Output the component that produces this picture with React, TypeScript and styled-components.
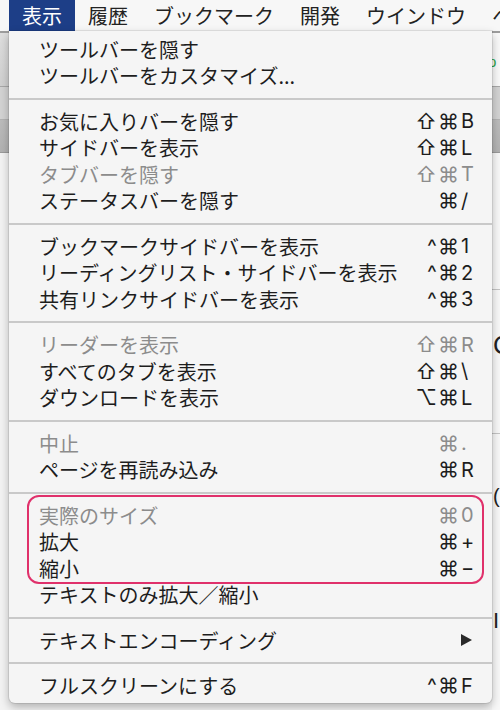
import React from "react";
import styled, { createGlobalStyle } from "styled-components";

type Item = {
  label: string;
  mods?: string;
  keyName?: string;
  disabled?: boolean;
  submenu?: boolean;
  boxed?: boolean;
};

const sections: Item[][] = [
  [{ label: "ツールバーを隠す" }, { label: "ツールバーをカスタマイズ..." }],
  [
    { label: "お気に入りバーを隠す", mods: "⇧⌘", keyName: "B" },
    { label: "サイドバーを表示", mods: "⇧⌘", keyName: "L" },
    { label: "タブバーを隠す", mods: "⇧⌘", keyName: "T", disabled: true },
    { label: "ステータスバーを隠す", mods: "⌘", keyName: "/" },
  ],
  [
    { label: "ブックマークサイドバーを表示", mods: "^⌘", keyName: "1" },
    { label: "リーディングリスト・サイドバーを表示", mods: "^⌘", keyName: "2" },
    { label: "共有リンクサイドバーを表示", mods: "^⌘", keyName: "3" },
  ],
  [
    { label: "リーダーを表示", mods: "⇧⌘", keyName: "R", disabled: true },
    { label: "すべてのタブを表示", mods: "⇧⌘", keyName: "\\" },
    { label: "ダウンロードを表示", mods: "⌥⌘", keyName: "L" },
  ],
  [
    { label: "中止", mods: "⌘", keyName: ".", disabled: true },
    { label: "ページを再読み込み", mods: "⌘", keyName: "R" },
  ],
  [
    { label: "実際のサイズ", mods: "⌘", keyName: "0", disabled: true, boxed: true },
    { label: "拡大", mods: "⌘", keyName: "+", boxed: true },
    { label: "縮小", mods: "⌘", keyName: "−", boxed: true },
    { label: "テキストのみ拡大／縮小" },
  ],
  [{ label: "テキストエンコーディング", submenu: true }],
  [{ label: "フルスクリーンにする", mods: "^⌘", keyName: "F" }],
];

const menus = ["表示", "履歴", "ブックマーク", "開発", "ウインドウ", "ヘルプ"];

const GlobalStyle = createGlobalStyle`
  body {
    margin: 0;
    background: #f3f3f3;
    overflow: hidden;
    font-family: "Noto Sans CJK JP", "Liberation Sans", sans-serif;
  }
`;

const Screen = styled.div`
  position: relative;
  width: 500px;
  height: 710px;
  overflow: hidden;
  background: #f3f3f3;
`;

const MenuBar = styled.div`
  display: flex;
  height: 31px;
  padding-left: 9px;
  background: #f7f7f7;
  border-bottom: 2px solid #9d9d9d;
  white-space: nowrap;
  overflow: hidden;
`;

const MenuTitle = styled.div<{ $active?: boolean }>`
  display: flex;
  align-items: center;
  padding: 0 13px;
  font-size: 20px;
  color: ${(p) => (p.$active ? "#fff" : "#222")};
  background: ${(p) => (p.$active ? "#1d3e87" : "transparent")};
`;

const Toolbar = styled.div`
  display: flex;
  justify-content: flex-end;
  height: 53px;
  background: linear-gradient(#dedede, #d0d0d0);
  border-bottom: 1px solid #a8a8a8;
`;

const AddressTail = styled.div`
  width: 12px;
  padding-top: 20px;
  background: #f9f9f9;
  color: #2fa44a;
  font-family: "Liberation Sans", sans-serif;
  font-size: 15px;
  overflow: hidden;
`;

const FavBar = styled.div`
  height: 32px;
  background: #d3d3d3;
  border-bottom: 1px solid #b3b3b3;
`;

const TabBar = styled.div`
  height: 32px;
  background: linear-gradient(#bcbcbc, #b2b2b2);
  border-bottom: 1px solid #9a9a9a;
`;

const Content = styled.div`
  display: flex;
  justify-content: flex-end;
  height: 600px;
`;

const PageEdge = styled.div`
  width: 8px;
  background: #f8f8f8;
  color: #222;
  font-family: "Liberation Sans", sans-serif;
  overflow: hidden;
`;

const EdgeGlyph = styled.div<{ $top: number; $size: number }>`
  margin-top: ${(p) => p.$top}px;
  font-size: ${(p) => p.$size}px;
  line-height: 1;
  padding-left: 1px;
`;

const EdgeRule = styled.div<{ $top: number }>`
  margin-top: ${(p) => p.$top}px;
  height: 1px;
  background: #c4c4c4;
`;

const Dropdown = styled.div`
  position: absolute;
  top: 31px;
  left: 9px;
  width: 483px;
  padding: 5px 0 4px;
  background: #f5f5f5;
  border-radius: 0 0 6px 6px;
  box-shadow: 0 0 0 1px rgba(0, 0, 0, 0.08), 0 4px 10px rgba(0, 0, 0, 0.28);
`;

const Row = styled.div<{ $disabled?: boolean }>`
  display: flex;
  align-items: center;
  height: 26.5px;
  padding: 0 18px 0 30px;
  font-size: 20px;
  white-space: nowrap;
  color: ${(p) => (p.$disabled ? "#8c8c8c" : "#1d1d1d")};
`;

const Label = styled.span`
  flex: 1;
`;

const Shortcut = styled.span`
  display: flex;
  align-items: center;
  font-family: Inter, "DejaVu Sans", sans-serif;
  font-size: 21px;
`;

const Mods = styled.span`
  letter-spacing: 1px;
  text-align: right;
`;

const Key = styled.span`
  width: 13px;
  margin-left: 1px;
  font-size: 20px;
`;

const SubArrow = styled.span`
  width: 0;
  height: 0;
  margin-right: 2px;
  border-top: 6px solid transparent;
  border-bottom: 6px solid transparent;
  border-left: 11px solid #2a2a2a;
`;

const Separator = styled.div`
  height: 2px;
  margin: 8.5px 0;
  background: #c9c9c9;
`;

const Boxed = styled.div`
  position: relative;
  &::before {
    content: "";
    position: absolute;
    top: -7px;
    bottom: -2px;
    left: 18px;
    right: 8px;
    border: 2px solid #e0316b;
    border-radius: 12px;
    pointer-events: none;
  }
`;

function MenuRow({ item }: { item: Item }) {
  return (
    <Row $disabled={item.disabled}>
      <Label>{item.label}</Label>
      {item.keyName && (
        <Shortcut>
          <Mods>{item.mods}</Mods>
          <Key>{item.keyName}</Key>
        </Shortcut>
      )}
      {item.submenu && <SubArrow />}
    </Row>
  );
}

function Section({ items }: { items: Item[] }) {
  const boxed = items.filter((i) => i.boxed);
  const rest = items.filter((i) => !i.boxed);
  return (
    <>
      {boxed.length > 0 && (
        <Boxed>
          {boxed.map((i) => (
            <MenuRow key={i.label} item={i} />
          ))}
        </Boxed>
      )}
      {rest.map((i) => (
        <MenuRow key={i.label} item={i} />
      ))}
    </>
  );
}

export default function App() {
  return (
    <Screen>
      <GlobalStyle />
      <MenuBar>
        {menus.map((m, i) => (
          <MenuTitle key={m} $active={i === 0}>
            {m}
          </MenuTitle>
        ))}
      </MenuBar>
      <Toolbar>
        <AddressTail>p</AddressTail>
      </Toolbar>
      <FavBar />
      <TabBar />
      <Content>
        <PageEdge>
          <EdgeRule $top={136} />
          <EdgeGlyph $top={42} $size={26}>C</EdgeGlyph>
          <EdgeRule $top={75} />
          <EdgeGlyph $top={52} $size={20}>(</EdgeGlyph>
          <EdgeGlyph $top={104} $size={22}>I</EdgeGlyph>
        </PageEdge>
      </Content>
      <Dropdown>
        {sections.map((s, i) => (
          <React.Fragment key={i}>
            {i > 0 && <Separator />}
            <Section items={s} />
          </React.Fragment>
        ))}
      </Dropdown>
    </Screen>
  );
}
